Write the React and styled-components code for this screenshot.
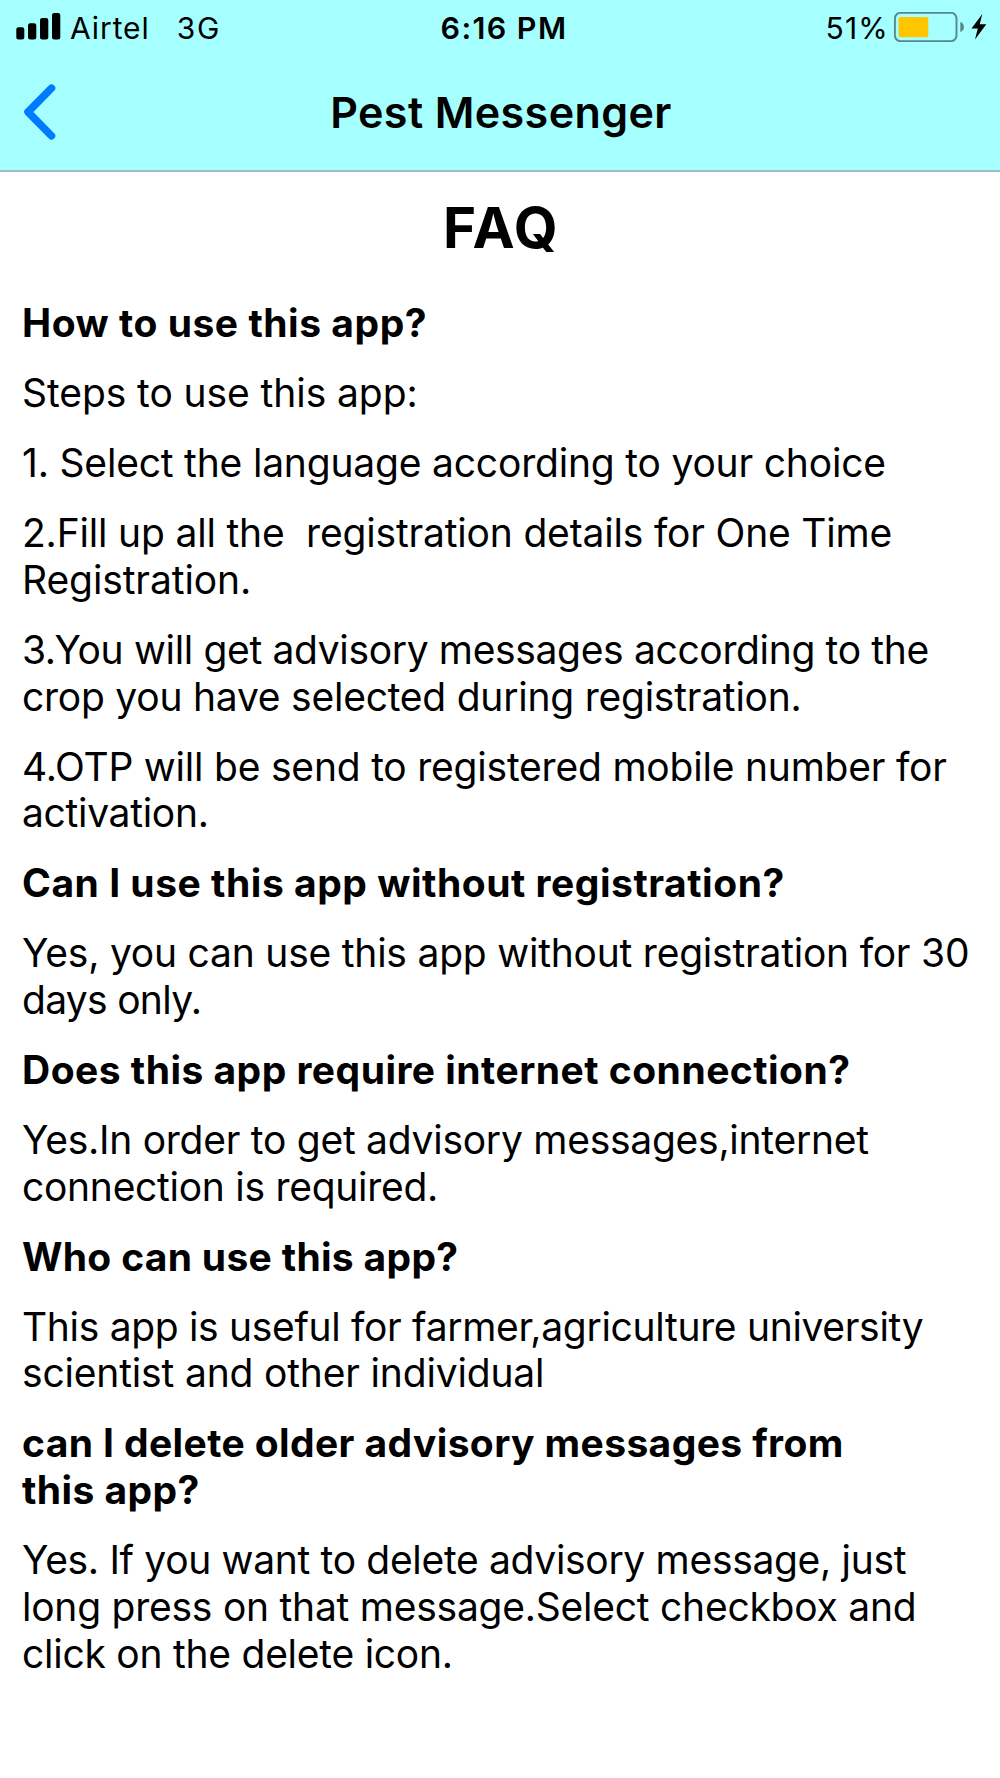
import React from "react";
import styled, { createGlobalStyle } from "styled-components";

const faq = [
  { question: true, lines: [["How to use this app?", 0.53]] },
  { lines: [["Steps to use this app:", -0.08]] },
  { lines: [["1. Select the language according to your choice", -0.19]] },
  {
    lines: [
      ["2.Fill up all the  registration details for One Time", -0.18],
      ["Registration.", -0.1],
    ],
  },
  {
    lines: [
      ["3.You will get advisory messages according to the", -0.345],
      ["crop you have selected during registration.", -0.235],
    ],
  },
  {
    lines: [
      ["4.OTP will be send to registered mobile number for", -0.21],
      ["activation.", -0.3],
    ],
  },
  { question: true, lines: [["Can I use this app without registration?", 0.53]] },
  {
    lines: [
      ["Yes, you can use this app without registration for 30", -0.22],
      ["days only.", -0.7],
    ],
  },
  { question: true, lines: [["Does this app require internet connection?", 0.48]] },
  {
    lines: [
      ["Yes.In order to get advisory messages,internet", -0.26],
      ["connection is required.", -0.281],
    ],
  },
  { question: true, lines: [["Who can use this app?", 0.31]] },
  {
    lines: [
      ["This app is useful for farmer,agriculture university", -0.32],
      ["scientist and other individual", -0.17],
    ],
  },
  {
    question: true,
    lines: [
      ["can I delete older advisory messages from", 0.39],
      ["this app?", 0.42],
    ],
  },
  {
    lines: [
      ["Yes. If you want to delete advisory message, just", -0.32],
      ["long press on that message.Select checkbox and", -0.24],
      ["click on the delete icon.", -0.25],
    ],
  },
];

const SignalIcon = () => (
  <svg width="45" height="28" viewBox="0 0 45 28">
    <rect x="0.3" y="14.3" width="8" height="12.2" rx="2.2" />
    <rect x="12" y="10.2" width="8.3" height="16.3" rx="2.2" />
    <rect x="24" y="5" width="8.3" height="21.5" rx="2.2" />
    <rect x="36" y="0" width="8.3" height="26.5" rx="2.2" />
  </svg>
);

const BatteryIcon = () => (
  <svg width="70" height="30" viewBox="0 0 70 30">
    <rect x="0.9" y="0.9" width="61.6" height="28.2" rx="5.5" fill="none" stroke="#56888a" strokeWidth="1.9" />
    <rect x="4.6" y="5" width="29.7" height="20.3" rx="2" fill="#ffc600" />
    <path d="M66.3 10c2.4.6 3.6 2.7 3.6 5s-1.2 4.4-3.6 5z" fill="#56888a" />
  </svg>
);

const BoltIcon = () => (
  <svg width="16" height="26" viewBox="0 0 16 26">
    <path d="M11.3 0 0.5 14.5h6.3L4 25.5 15.3 10.3H8.7z" />
  </svg>
);

const App = () => {
  return (
    <Screen>
      <GlobalStyle />
      <Header>
        <StatusBar>
          <Carrier>
            <SignalIcon />
            <StatusText $spacing={0.92}>Airtel</StatusText>
            <StatusText $spacing={1.8}>3G</StatusText>
          </Carrier>
          <Clock $spacing={1.4} $weight={600}>
            6:16 PM
          </Clock>
          <Power>
            <StatusText $spacing={1.2}>51%</StatusText>
            <BatteryIcon />
            <BoltIcon />
          </Power>
        </StatusBar>
        <NavBar>
          <BackButton aria-label="Back">
            <svg width="34" height="56" viewBox="0 0 34 56">
              <path d="M28.5 4.2 5 28 28.5 51.8" fill="none" stroke="#007aff" strokeWidth="7.6" strokeLinecap="round" strokeLinejoin="round" />
            </svg>
          </BackButton>
          <NavTitle>Pest Messenger</NavTitle>
        </NavBar>
      </Header>
      <Content>
        <PageTitle>FAQ</PageTitle>
        {faq.map(({ question, lines }) => (
          <Paragraph key={lines[0][0]} as={question ? "h2" : "p"} $bold={question}>
            {lines.map(([text, spacing]) => (
              <Line key={text} $spacing={spacing}>
                {text}
              </Line>
            ))}
          </Paragraph>
        ))}
      </Content>
    </Screen>
  );
};

export default App;

const GlobalStyle = createGlobalStyle`
  body {
    margin: 0;
    background: #fff;
  }
`;

const Screen = styled.div`
  width: 1000px;
  height: 1778px;
  overflow: hidden;
  background: #fff;
  color: #000;
  font-family: Inter, "Liberation Sans", sans-serif;

  svg {
    display: block;
    flex: none;
  }
`;

const Header = styled.header`
  box-sizing: border-box;
  height: 172px;
  background: #a6ffff;
  border-bottom: 2px solid #9dbfc2;
`;

const StatusBar = styled.div`
  box-sizing: border-box;
  display: grid;
  grid-template-columns: 1fr auto 1fr;
  align-items: start;
  height: 56px;
  padding: 10px 13px 0 16px;
`;

const StatusText = styled.span`
  font-size: 30px;
  line-height: 36px;
  font-weight: ${({ $weight }) => $weight || 400};
  letter-spacing: ${({ $spacing }) => $spacing}px;
  white-space: pre;
`;

const Clock = styled(StatusText)`
  padding-left: 5px;
  font-size: 30.5px;
`;

const Carrier = styled.div`
  display: flex;

  svg {
    margin: 3px 9px 0 0;
  }

  span + span {
    margin-left: 27px;
  }
`;

const Power = styled.div`
  display: flex;
  justify-content: flex-end;

  svg {
    margin: 2px 0 0 5px;
  }

  svg:last-child {
    margin: 4px 0 0 7px;
  }
`;

const NavBar = styled.nav`
  display: grid;
  grid-template-columns: 60px 1fr 60px;
  align-items: center;
  height: 112px;
  padding: 0 21px 0 23px;
`;

const BackButton = styled.button`
  padding: 0;
  border: none;
  background: none;
  cursor: pointer;
`;

const NavTitle = styled.h1`
  margin: 0;
  font-size: 43px;
  line-height: 52px;
  font-weight: 600;
  letter-spacing: 0.4px;
  text-align: center;
`;

const Content = styled.main`
  padding: 22px 20px 0 22px;
`;

const PageTitle = styled.h2`
  margin: 0 0 38.2px;
  font-size: 56.5px;
  line-height: 68px;
  font-weight: 700;
  letter-spacing: 1.5px;
  text-align: center;
`;

const Paragraph = styled.p`
  margin: 0 0 23.3px;
  font-size: 39px;
  line-height: 46.7px;
  font-weight: ${({ $bold }) => ($bold ? 700 : 400)};
`;

const Line = styled.span`
  display: block;
  letter-spacing: ${({ $spacing }) => $spacing}px;
  white-space: pre;
`;
